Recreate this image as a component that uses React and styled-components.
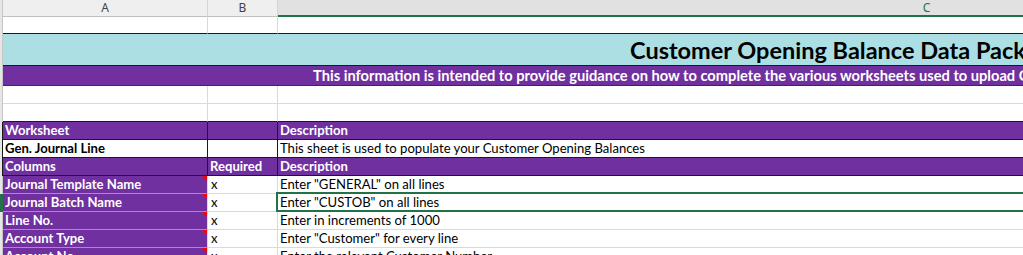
import React from "react";
import styled, { createGlobalStyle, css } from "styled-components";

const PURPLE = "#7030a0";
const TEAL = "#abdfe3";
const GRID = "#dadada";
const GREEN = "#217346";
const DARK = "#1a1a1a";

const GlobalStyle = createGlobalStyle`
  html, body {
    margin: 0;
    padding: 0;
    background: #ffffff;
  }
  body {
    font-family: Lato, "Liberation Sans", sans-serif;
  }
`;

const Sheet = styled.div`
  width: 1023px;
  height: 255px;
  overflow: hidden;
  background: #ffffff;
`;

const Row = styled.div`
  display: flex;
  flex-wrap: nowrap;
  height: ${(p) => p.$h || 18}px;
`;

const RowHead = styled.div`
  flex: 0 0 3px;
  box-sizing: border-box;
  background: ${(p) => (p.$active ? GREEN : "#e6e6e6")};
  border-right: 1px solid
    ${(p) => (p.$active ? GREEN : p.$dark ? DARK : "#c6c6c6")};
`;

const ColHead = styled.div`
  flex: 0 0 ${(p) => p.$w}px;
  box-sizing: border-box;
  background: ${(p) => (p.$selected ? "#e1e1e1" : "#efefef")};
  border-right: 1px solid #d4d4d4;
  border-bottom: ${(p) =>
    p.$selected ? `2px solid ${GREEN}` : "1px solid #c0c0c0"};
  color: ${(p) => (p.$selected ? GREEN : "#444444")};
  font-family: "Noto Sans", "Open Sans", sans-serif;
  font-size: 12px;
  line-height: 16px;
  text-align: center;
`;

const Cell = styled.div`
  flex: 0 0 ${(p) => p.$w}px;
  position: relative;
  box-sizing: border-box;
  padding-left: ${(p) => p.$pad ?? 2}px;
  background: ${(p) => p.$bg || "#ffffff"};
  color: ${(p) => p.$color || "#000000"};
  font-weight: ${(p) => (p.$bold ? 700 : 400)};
  font-size: 13.1px;
  line-height: ${(p) => (p.$h || 18) - 1}px;
  white-space: nowrap;
  overflow: hidden;
  border-right: 1px solid ${(p) => p.$rb || GRID};
  border-bottom: 1px solid ${(p) => p.$bb || GRID};

  ${(p) =>
    p.$note &&
    css`
      &::before {
        content: "";
        position: absolute;
        top: -1px;
        right: 0;
        width: 0;
        height: 0;
        border-top: 6px solid #ff0000;
        border-left: 6px solid transparent;
      }
    `}

  ${(p) =>
    p.$selected &&
    css`
      overflow: visible;
      &::after {
        content: "";
        position: absolute;
        left: -2px;
        top: -2px;
        right: 0;
        bottom: -1px;
        border: 2px solid ${GREEN};
      }
    `}
`;

const Merged = styled(Cell)`
  border-right: none;
`;

const Title = styled(Merged)`
  font-size: 23.5px;
  font-weight: 700;
  line-height: 32px;
`;

const Banner = styled(Merged)`
  font-size: 14.67px;
  line-height: 20px;
`;

const W_A = 205;
const W_B = 70;
const W_C = 1298;
const W_ALL = W_A + W_B + W_C;

const columnRows = [
  { name: "Journal Template Name", desc: 'Enter "GENERAL" on all lines' },
  { name: "Journal Batch Name", desc: 'Enter "CUSTOB" on all lines', selected: true },
  { name: "Line No.", desc: "Enter in increments of 1000" },
  { name: "Account Type", desc: 'Enter "Customer" for every line' },
  { name: "Account No.", desc: "Enter the relevant Customer Number" },
];

function PlainRow({ h = 18, bottom, dark }) {
  return (
    <Row $h={h}>
      <RowHead $dark={dark} />
      <Cell $w={W_A} $h={h} $bb={bottom} />
      <Cell $w={W_B} $h={h} $bb={bottom} />
      <Cell $w={W_C} $h={h} $bb={bottom} />
    </Row>
  );
}

function HeaderBand({ a, b, c }) {
  return (
    <Row>
      <RowHead $dark />
      <Cell $w={W_A} $bg={PURPLE} $color="#fff" $bold $rb={DARK} $bb={DARK}>
        {a}
      </Cell>
      <Cell $w={W_B} $bg={PURPLE} $color="#fff" $bold $rb={DARK} $bb={DARK}>
        {b}
      </Cell>
      <Cell $w={W_C} $bg={PURPLE} $color="#fff" $bold $rb={DARK} $bb={DARK}>
        {c}
      </Cell>
    </Row>
  );
}

export default function App() {
  return (
    <>
      <GlobalStyle />
      <Sheet>
        <Row $h={17}>
          <RowHead />
          <ColHead $w={W_A}>A</ColHead>
          <ColHead $w={W_B}>B</ColHead>
          <ColHead $w={W_C} $selected>
            C
          </ColHead>
        </Row>

        <PlainRow h={17} bottom={DARK} />

        <Row $h={32}>
          <RowHead />
          <Title $w={W_ALL} $h={32} $bg={TEAL} $bb={DARK} $pad={627}>
            Customer Opening Balance Data Pack
          </Title>
        </Row>

        <Row $h={20}>
          <RowHead />
          <Banner
            $w={W_ALL}
            $h={20}
            $bg={PURPLE}
            $color="#fff"
            $bold
            $bb="#3b2a4c"
            $pad={310}
          >
            This information is intended to provide guidance on how to complete
            the various worksheets used to upload Customer Opening Balances
          </Banner>
        </Row>

        <PlainRow />
        <PlainRow bottom={DARK} />

        <HeaderBand a="Worksheet" b="" c="Description" />

        <Row>
          <RowHead $dark />
          <Cell $w={W_A} $bold $rb={DARK} $bb={DARK}>
            Gen. Journal Line
          </Cell>
          <Cell $w={W_B} $rb={DARK} $bb={DARK} />
          <Cell $w={W_C} $rb={DARK} $bb={DARK}>
            This sheet is used to populate your Customer Opening Balances
          </Cell>
        </Row>

        <HeaderBand a="Columns" b="Required" c="Description" />

        {columnRows.map((r) => (
          <Row key={r.name}>
            <RowHead $active={r.selected} />
            <Cell
              $w={W_A}
              $bg={PURPLE}
              $color="#fff"
              $bold
              $bb="#a58cc8"
              $note
            >
              {r.name}
            </Cell>
            <Cell $w={W_B} $pad={3}>
              x
            </Cell>
            <Cell $w={W_C} $selected={r.selected}>
              {r.desc}
            </Cell>
          </Row>
        ))}
      </Sheet>
    </>
  );
}
